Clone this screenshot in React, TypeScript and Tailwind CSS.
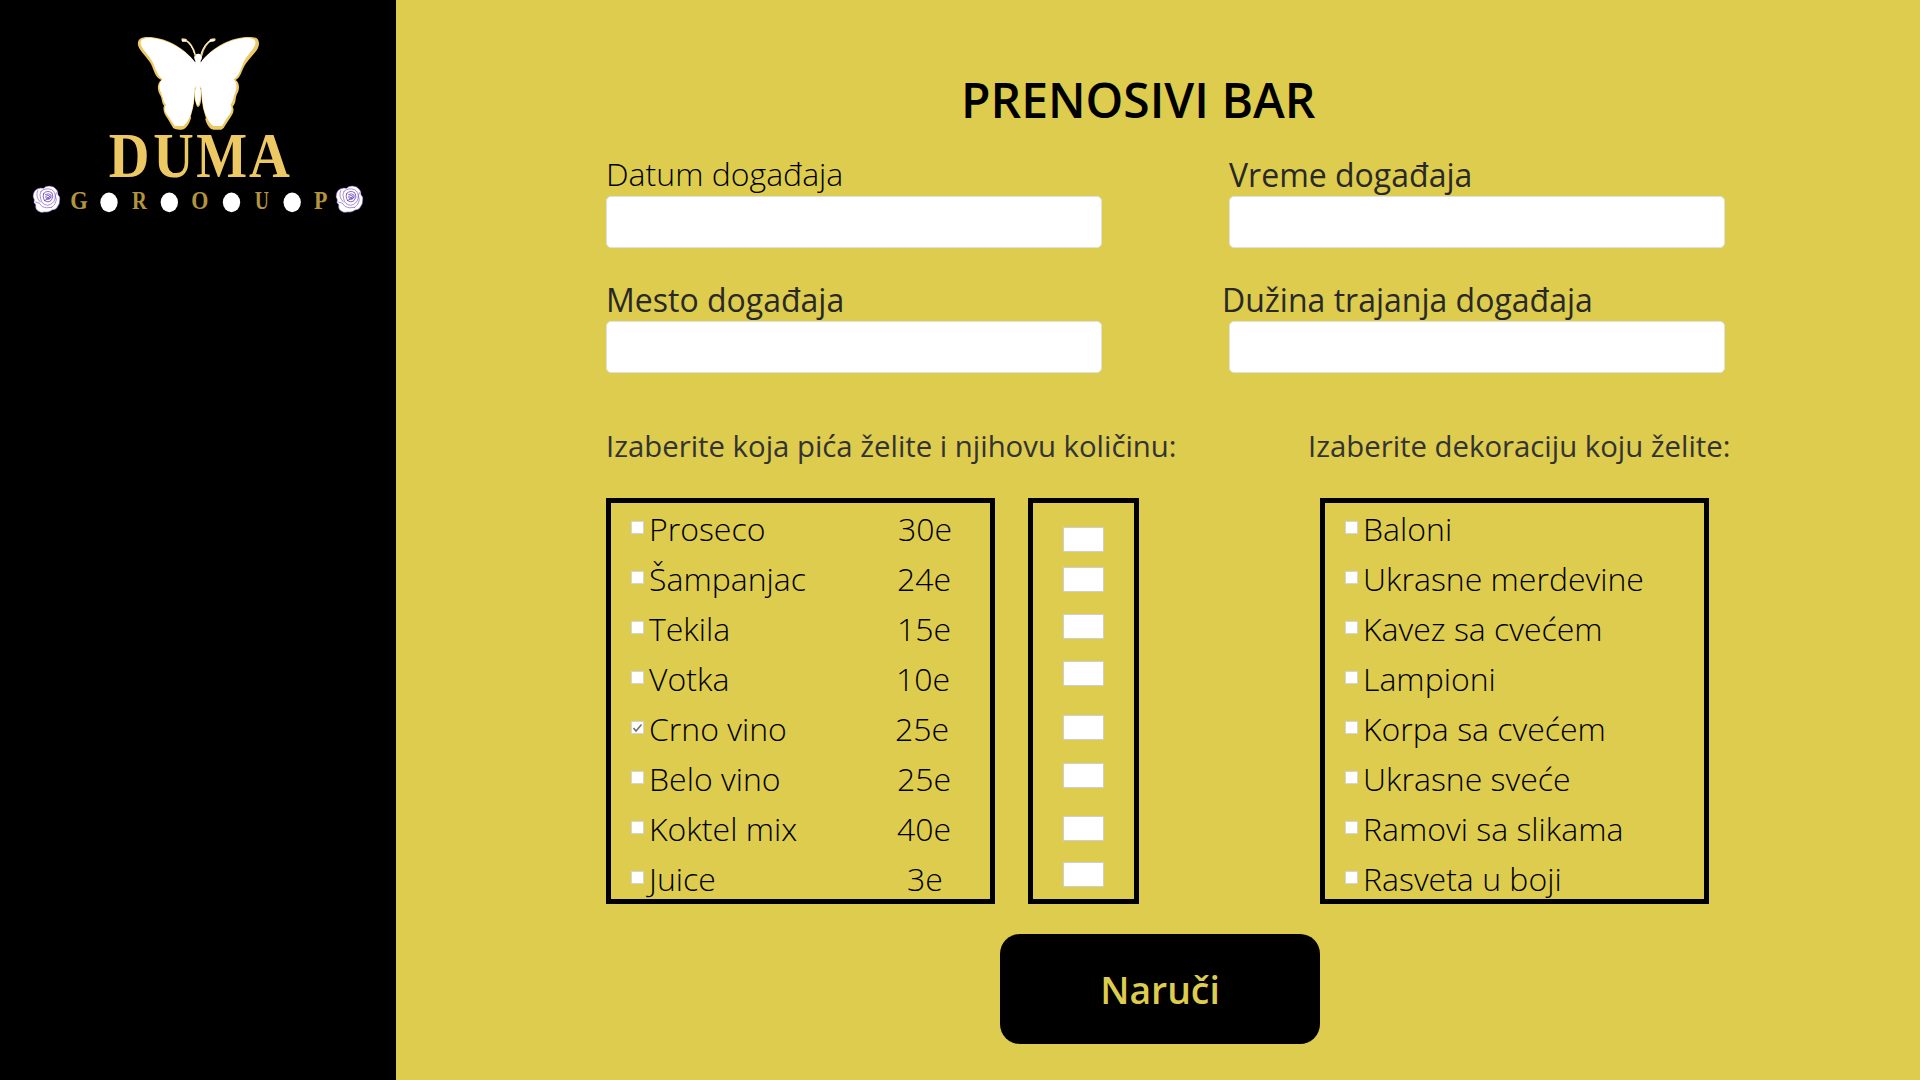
const drinks = [
  { name: "Proseco", price: "30e", pad: "pl-[1px]" },
  { name: "Šampanjac", price: "24e", pad: "pl-0" },
  { name: "Tekila", price: "15e", pad: "pl-0" },
  { name: "Votka", price: "10e", pad: "-ml-[1px]" },
  { name: "Crno vino", price: "25e", pad: "-ml-[2px]", checked: true },
  { name: "Belo vino", price: "25e", pad: "pl-0" },
  { name: "Koktel mix", price: "40e", pad: "pl-0" },
  { name: "Juice", price: "3e", pad: "pl-[10px]" },
];

const decorations = [
  "Baloni",
  "Ukrasne merdevine",
  "Kavez sa cvećem",
  "Lampioni",
  "Korpa sa cvećem",
  "Ukrasne sveće",
  "Ramovi sa slikama",
  "Rasveta u boji",
];

const quantityGaps = [
  "mt-[24px]",
  "mt-[15px]",
  "mt-[22px]",
  "mt-[22px]",
  "mt-[29px]",
  "mt-[23px]",
  "mt-[28px]",
  "mt-[21px]",
];

function Rose({ x }: { x: number }) {
  return (
    <g transform={`translate(${x} 496)`} stroke="#5a2fb0" strokeWidth="1.6" fill="none" strokeLinecap="round">
      <path
        fill="#fff"
        stroke="#6f45bd"
        d="M14 10 Q24 6 32 9 Q38 1 50 2 Q62 2 68 10 Q76 16 75 28 Q83 34 80 46 Q80 56 75 62 Q70 74 58 74 Q48 82 36 80 Q22 84 14 76 Q6 70 8 58 Q0 52 4 44 Q-2 34 1 26 Q4 14 14 10 Z"
      />
      <path d="M24 18 Q38 6 56 13 Q70 22 66 40 Q62 56 44 60 Q26 58 23 40 Q18 28 24 18" />
      <path strokeWidth="2.2" d="M32 24 Q44 13 57 23 Q64 36 54 46 Q42 54 33 43 Q28 32 32 24" />
      <path strokeWidth="2.2" d="M37 28 Q47 22 54 29 Q57 37 48 42 Q38 42 38 34 Q44 27 50 32 Q50 38 43 37 M34 46 L54 36" />
      <path d="M14 16 Q6 34 22 50 M8 50 Q20 50 28 64 Q38 70 56 66 M70 22 Q64 30 70 44 Q68 58 56 66" />
    </g>
  );
}

const leftWing =
  "M525 127 C495 85 430 54 388 54 C366 54 360 61 362 72 C366 88 386 104 399 128 C408 150 412 166 428 178 C416 188 416 204 424 220 C430 236 430 246 438 254 C430 266 436 278 446 290 L464 318 L490 318 C508 304 522 270 524 204 L534 190 Z";
const rightWing =
  "M543 127 C573 85 638 54 680 54 C702 54 708 61 706 72 C702 88 682 104 670 128 C661 150 656 170 640 178 C652 188 651 204 645 220 C638 236 640 246 631 254 C639 266 634 278 623 290 L606 318 L580 318 C562 304 546 270 544 204 L534 190 Z";

const dumaLetters = [
  { char: "D", x: 266.5, scale: 0.89 },
  { char: "U", x: 400, scale: 0.885 },
  { char: "M", x: 529, scale: 0.85 },
  { char: "A", x: 687, scale: 0.893 },
];

const groupLetters = [
  { char: "G", x: 151, scale: 0.9 },
  { char: "R", x: 336, scale: 0.82 },
  { char: "O", x: 514, scale: 0.88 },
  { char: "U", x: 704, scale: 0.79 },
  { char: "P", x: 882, scale: 0.88 },
];

function Logo() {
  return (
    <svg viewBox="0 0 1080 600" className="block h-[200px] w-[360px]">
      <path
        fill="#ecc963"
        d="M525 127 C490 78 430 51 384 51 C358 51 352 61 354 76 C360 96 382 112 393 132 C403 152 404 172 424 180 C411 190 411 210 420 224 C428 238 424 248 432 256 C428 270 432 282 443 296 L460 325 Q468 330 484 329 C508 328 522 285 526 204 L543 204 C546 285 560 326 580 329 L604 329 Q612 326 616 316 L634 288 Q645 272 638 260 C650 246 644 240 651 222 C660 208 659 188 647 180 C664 172 664 150 677 132 C690 110 718 92 717 70 C716 52 704 51 684 51 C638 51 578 78 543 127 Z"
      />
      <path fill="#fff" d={leftWing} />
      <path fill="#fff" d={rightWing} />
      <path fill="#000" d="M527 204 L521 258 L512 290 L534 320 L558 295 L548 262 L541 204 Z" />
      <path fill="#ecc963" d="M527 202 Q519 230 528 252 Q534 272 541 252 Q548 230 541 202 Z" />
      <path fill="#fff" d="M527 200 Q522 230 529 248 Q534 264 538 248 Q545 230 541 200 Z" />
      <path fill="#fff" d="M526 104 Q534 98 544 104 Q549 112 542 122 L546 190 L534 206 L522 190 L526 122 Q519 110 526 104 Z" />
      <g fill="none" strokeLinecap="round">
        <path stroke="#ecc963" strokeWidth="5" d="M526 106 Q518 72 496 60 M545 106 Q553 72 575 60" />
        <path stroke="#fff" strokeWidth="3" d="M524 102 Q516 72 496 60 M543 102 Q551 73 573 61" />
        <path stroke="#ecc963" strokeWidth="8" d="M488 59 L497 60 M573 60 L583 59" />
        <path stroke="#fff" strokeWidth="7" d="M489 62 L495 62 M572 62 L580 61" />
      </g>
      <g fill="#ecc963" fontFamily="'Liberation Serif', serif" fontWeight="700" fontSize="190">
        {dumaLetters.map((l) => (
          <text key={l.char} transform={`translate(${l.x} 470) scale(${l.scale} 1)`}>
            {l.char}
          </text>
        ))}
      </g>
      <g fill="#b3953f" fontFamily="'Liberation Serif', serif" fontWeight="700" fontSize="75">
        {groupLetters.map((l) => (
          <text key={l.char} transform={`translate(${l.x} 567) scale(${l.scale} 1)`}>
            {l.char}
          </text>
        ))}
      </g>
      <g fill="#fff">
        <ellipse cx="267" cy="547" rx="26" ry="29.5" />
        <ellipse cx="448" cy="547" rx="26" ry="29.5" />
        <ellipse cx="634.5" cy="547" rx="26" ry="29.5" />
        <ellipse cx="816.5" cy="547" rx="26" ry="29.5" />
      </g>
      <Rose x={39} />
      <Rose x={948} />
    </svg>
  );
}

function CheckBox({ checked }: { checked?: boolean }) {
  return (
    <span className="mt-[18px] block h-[13px] w-[13px] shrink-0 border border-[#d4d4d4] bg-white">
      {checked && (
        <svg viewBox="0 0 11 11" className="block h-[11px] w-[11px]">
          <path d="M1.5 6 L4 9 L9.5 2.5" fill="none" stroke="#6b6b6b" strokeWidth="1.5" />
        </svg>
      )}
    </span>
  );
}

function Field({ label, labelClass }: { label: string; labelClass: string }) {
  return (
    <label className="block w-[496px]">
      <span className={`block h-[44px] text-[32px] whitespace-nowrap ${labelClass}`}>{label}</span>
      <input className="block h-[52px] w-full rounded-[5px] border border-[#e0e0e0] bg-white px-3 outline-none" />
    </label>
  );
}

export default function App() {
  return (
    <div className="flex h-[1080px] w-[1920px] overflow-hidden bg-[#ddcc4d] font-['Open_Sans',sans-serif] text-black">
      <aside className="w-[396px] shrink-0 bg-black pt-[20px] pl-[20px]">
        <Logo />
      </aside>

      <main className="flex flex-1 flex-col pl-[210px]">
        <h1 className="mt-[67px] ml-[355px] h-[66px] text-[48px] leading-[66px] font-semibold whitespace-nowrap">
          PRENOSIVI BAR
        </h1>

        <div className="mt-[19px] grid grid-cols-[496px_496px] gap-x-[127px] gap-y-[29px]">
          <Field label="Datum događaja" labelClass="leading-[44px] font-light" />
          <Field label="Vreme događaja" labelClass="leading-[46px] text-[#292929]" />
          <Field label="Mesto događaja" labelClass="leading-[46px] text-[#292929]" />
          <Field label="Dužina trajanja događaja" labelClass="-ml-[7px] leading-[46px] text-[#292929]" />
        </div>

        <div className="mt-[53px] flex h-[40px] text-[29.33px] leading-[40px] whitespace-nowrap text-[#333]">
          <h2 className="w-[702px]">Izaberite koja pića želite i njihovu količinu:</h2>
          <h2>Izaberite dekoraciju koju želite:</h2>
        </div>

        <div className="mt-[32px] flex text-[32px] leading-[52px] font-light whitespace-nowrap">
          <ul className="h-[406px] w-[389px] border-[5px] border-black pl-[20px]">
            {drinks.map((d) => (
              <li key={d.name} className="flex h-[50px]">
                <CheckBox checked={d.checked} />
                <span className="ml-[5px] w-[248px]">{d.name}</span>
                <span className={d.pad}>{d.price}</span>
              </li>
            ))}
          </ul>

          <div className="ml-[33px] flex h-[406px] w-[111px] flex-col items-center border-[5px] border-black">
            {quantityGaps.map((gap, i) => (
              <input
                key={i}
                className={`block h-[25px] w-[41px] shrink-0 border border-[#cfcfcf] bg-white outline-none ${gap}`}
              />
            ))}
          </div>

          <ul className="ml-[181px] h-[406px] w-[389px] border-[5px] border-black pl-[20px]">
            {decorations.map((name) => (
              <li key={name} className="flex h-[50px]">
                <CheckBox />
                <span className="ml-[5px]">{name}</span>
              </li>
            ))}
          </ul>
        </div>

        <button className="mt-[30px] ml-[394px] h-[110px] w-[320px] rounded-[20px] bg-black pt-[1px] text-[37.33px] font-semibold text-[#ddcc4d]">
          Naruči
        </button>
      </main>
    </div>
  );
}
